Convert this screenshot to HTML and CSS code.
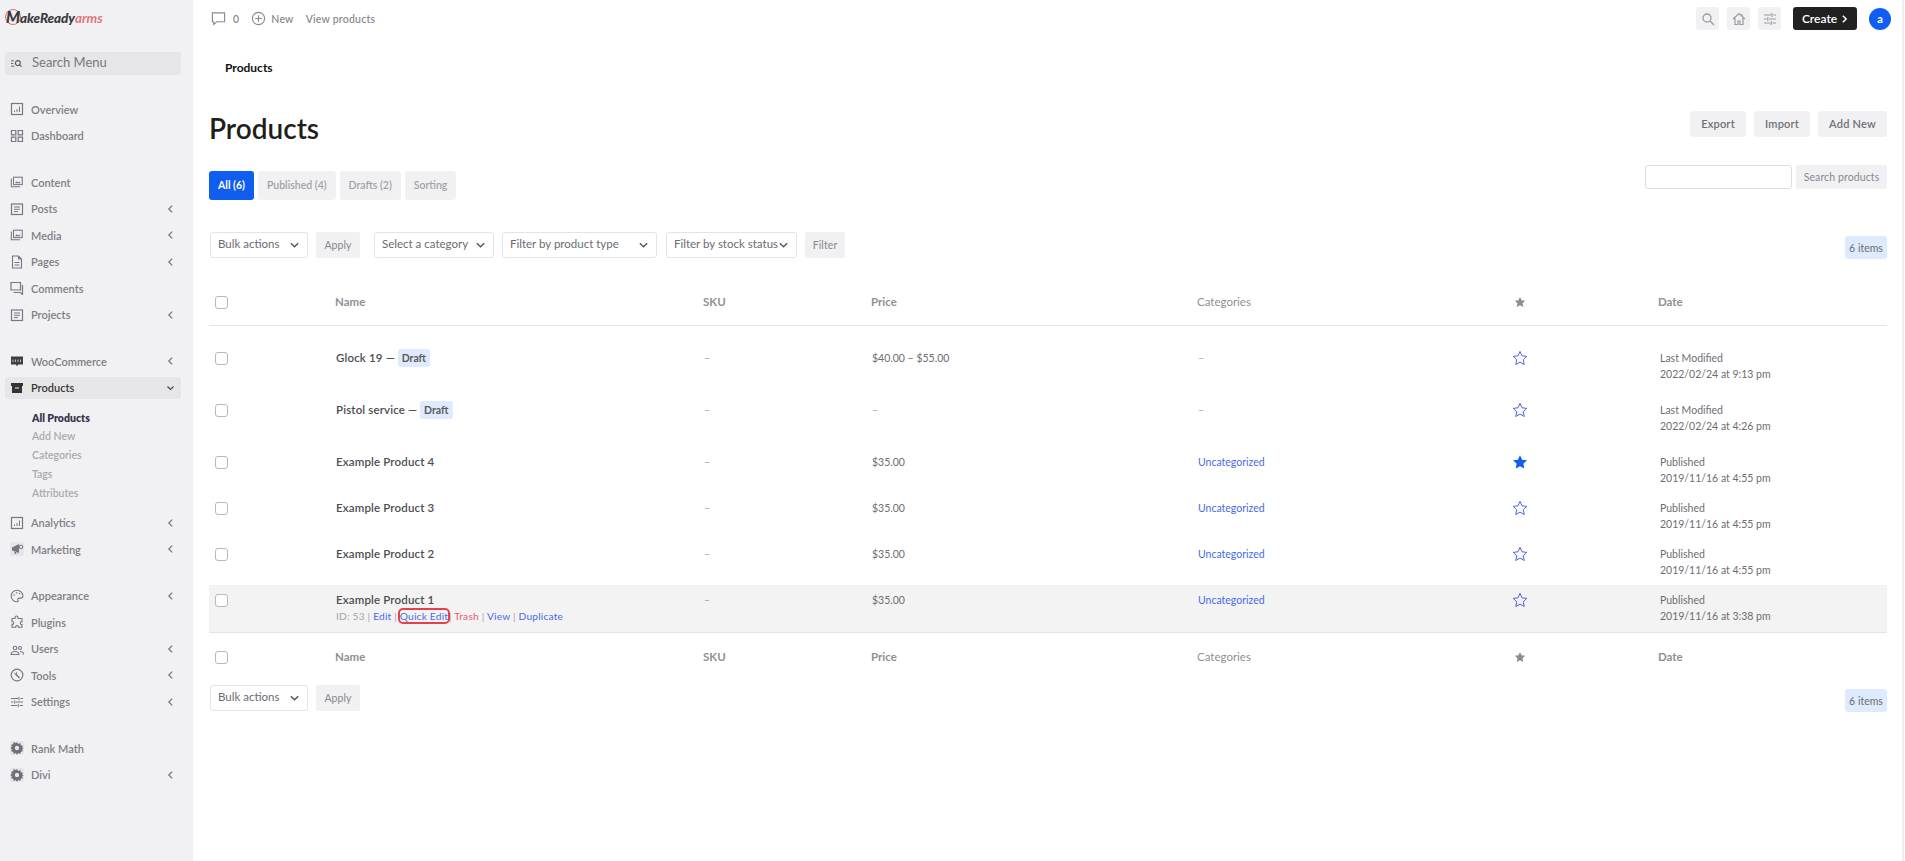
FILE: index.html
```html
<!DOCTYPE html>
<html lang="en">
<head>
<meta charset="utf-8">
<title>Products</title>
<link rel="stylesheet" href="styles.css">
</head>
<body>
<svg class="defs" width="0" height="0" aria-hidden="true">
  <symbol id="left" viewBox="0 0 8 12"><path d="M6 2 2 6l4 4" fill="none" stroke="currentColor" stroke-width="1.5"/></symbol>
  <symbol id="down" viewBox="0 0 12 8"><path d="M2 2l4 4 4-4" fill="none" stroke="currentColor" stroke-width="1.5"/></symbol>
  <symbol id="doc" viewBox="0 0 14 14"><rect x="1.5" y="2" width="11" height="10.5" fill="none" stroke="currentColor" stroke-width="1.2"/><path d="M4 5h6M4 7.3h6M4 9.6h4" stroke="currentColor" stroke-width="1"/></symbol>
  <symbol id="media" viewBox="0 0 16 14"><path d="M1.5 3v9.5h10" fill="none" stroke="currentColor" stroke-width="1.2"/><rect x="4" y="1.5" width="10" height="8.5" fill="none" stroke="currentColor" stroke-width="1.2"/><path d="M5.5 8.5l2.2-2.5 1.5 1.5 1.3-1 1.8 2z" fill="currentColor"/></symbol>
  <symbol id="chart" viewBox="0 0 14 14"><rect x="1.5" y="1.5" width="11" height="11" fill="none" stroke="currentColor" stroke-width="1.2"/><path d="M4.5 10V8.5M7 10V7M9.5 10V4.5" stroke="currentColor" stroke-width="1"/></symbol>
  <symbol id="gear" viewBox="0 0 14 14"><rect width="14" height="14" rx="2" fill="#e6e6e9"/><path d="M7 1.200l1.300 1.700 2-.8.500 2.100 2.100.5-.8 2L13.800 7l-1.700 1.300.8 2-2.100.5-.5 2.100-2-.8L7 13.800l-1.300-1.700-2 .8-.5-2.100-2.100-.5.8-2L.2 7l1.700-1.300-.8-2 2.100-.5.5-2.100 2 .8z" fill="#6f6f76"/><circle cx="7" cy="7" r="2.200" fill="#e6e6e9"/></symbol>
  <symbol id="star" viewBox="0 0 16 16"><path d="M8 1.400l2 4.400 4.800.6-3.500 3.300.9 4.800L8 12.100l-4.200 2.400.9-4.800L1.200 6.400 6 5.800z" fill="none" stroke="currentColor" stroke-width="1"/></symbol>
  <symbol id="starfill" viewBox="0 0 16 16"><path d="M8 1.200l2.100 4.500 4.900.6-3.600 3.400.9 4.900L8 12.200l-4.300 2.400.9-4.900L1 6.300l4.900-.6z" fill="currentColor"/></symbol>
</svg>

<aside class="sidebar">
  <div class="logo"><span class="logo-m"></span><span class="logo-text"><i>M</i>akeReady<b>arms</b></span></div>
  <div class="menu-search">
    <svg class="search-icon" viewBox="0 0 14 10"><path d="M1 2h3M1 5h2.500M1 8h3.500" stroke="#55555c" stroke-width="1"/><circle cx="8.500" cy="4.500" r="2.700" fill="none" stroke="#55555c" stroke-width="1.200"/><path d="M10.500 6.500l2 2" stroke="#55555c" stroke-width="1.200"/></svg>
    <span>Search Menu</span>
  </div>
  <nav class="nav">
    <div class="group">
      <a class="item"><svg class="ic"><use href="#chart"/></svg><span>Overview</span></a>
      <a class="item"><svg class="ic" viewBox="0 0 14 14"><path d="M1.500 1.500h4.300v4.300H1.500zM8.200 1.500h4.300v4.300H8.200zM1.500 8.200h4.300v4.300H1.500zM8.200 8.200h4.300v4.300H8.200z" fill="none" stroke="currentColor" stroke-width="1.200"/></svg><span>Dashboard</span></a>
    </div>
    <div class="group">
      <a class="item"><svg class="ic"><use href="#media"/></svg><span>Content</span></a>
      <a class="item"><svg class="ic"><use href="#doc"/></svg><span>Posts</span><svg class="chev"><use href="#left"/></svg></a>
      <a class="item"><svg class="ic"><use href="#media"/></svg><span>Media</span><svg class="chev"><use href="#left"/></svg></a>
      <a class="item"><svg class="ic" viewBox="0 0 14 14"><path d="M2.500 1h6l3 3v9h-9zM8.500 1v3h3M4.500 7.500h5M4.500 10h5" fill="none" stroke="currentColor" stroke-width="1.100"/></svg><span>Pages</span><svg class="chev"><use href="#left"/></svg></a>
      <a class="item"><svg class="ic" viewBox="0 0 14 14"><path d="M1 1.500h9.500v7.500H1zM12.500 4v9.500l-2-2H3.500" fill="none" stroke="currentColor" stroke-width="1.200"/></svg><span>Comments</span></a>
      <a class="item"><svg class="ic"><use href="#doc"/></svg><span>Projects</span><svg class="chev"><use href="#left"/></svg></a>
    </div>
    <div class="group">
      <a class="item"><svg class="ic" viewBox="0 0 14 14"><path d="M1 2.500h12v8H8l-1 2-1-2H1z" fill="#3f3f43"/><path d="M3 5.500v2.500M5.500 5.500v2.500M8 5.500v2.500M10.500 5.500v2.500" stroke="#bdbdc2" stroke-width="1"/></svg><span>WooCommerce</span><svg class="chev"><use href="#left"/></svg></a>
      <a class="item active"><svg class="ic" viewBox="0 0 14 14"><path d="M1 2h12v3H1z" fill="currentColor"/><path d="M2 5h10v7H2z" fill="currentColor"/><path d="M5 7h4" stroke="#f1f1f4" stroke-width="1"/></svg><span>Products</span><svg class="chev-down"><use href="#down"/></svg></a>
      <div class="sub">
        <a class="sub-item current">All Products</a>
        <a class="sub-item">Add New</a>
        <a class="sub-item">Categories</a>
        <a class="sub-item">Tags</a>
        <a class="sub-item">Attributes</a>
      </div>
      <a class="item"><svg class="ic"><use href="#chart"/></svg><span>Analytics</span><svg class="chev"><use href="#left"/></svg></a>
      <a class="item"><svg class="ic" viewBox="0 0 14 14"><rect width="14" height="14" rx="2" fill="#e6e6e9"/><path d="M2 5.500l7-3.500v9L2 8.500zM4 9l1 3h1.500L6 9.500z" fill="#77777e"/><circle cx="11" cy="5" r="1.800" fill="none" stroke="#77777e"/></svg><span>Marketing</span><svg class="chev"><use href="#left"/></svg></a>
    </div>
    <div class="group">
      <a class="item"><svg class="ic" viewBox="0 0 14 14"><path d="M7 1.200a5.800 5.800 0 1 0 0 11.600c1.300 0 1.500-1 1-1.700-.6-.9 0-2 1.200-2h1.800c1.200 0 1.800-.9 1.800-2.100C12.800 3.700 10.200 1.200 7 1.200z" fill="none" stroke="currentColor" stroke-width="1.100"/><circle cx="4" cy="6" r=".8" fill="currentColor"/><circle cx="6.500" cy="3.800" r=".8" fill="currentColor"/><circle cx="9.500" cy="4.500" r=".8" fill="currentColor"/></svg><span>Appearance</span><svg class="chev"><use href="#left"/></svg></a>
      <a class="item"><svg class="ic" viewBox="0 0 14 14"><path d="M5 2.500c0-2 3-2 3 0v1h4v3.200c-2-.6-2.500 3.300 0 2.800v2.800H8.500c.5-2.200-3.300-2.200-2.800 0H2V9.300C4.200 9.800 4.200 6 2 6.500V3.500h3z" fill="none" stroke="currentColor" stroke-width="1.100"/></svg><span>Plugins</span></a>
      <a class="item"><svg class="ic" viewBox="0 0 14 14"><circle cx="5" cy="6" r="1.800" fill="none" stroke="currentColor" stroke-width="1.100"/><circle cx="10" cy="6" r="1.500" fill="none" stroke="currentColor" stroke-width="1.100"/><path d="M1 12.500c0-4 8-4 8 0zM10 9.500c2 0 3.500 1 3.500 3" fill="none" stroke="currentColor" stroke-width="1.100"/></svg><span>Users</span><svg class="chev"><use href="#left"/></svg></a>
      <a class="item"><svg class="ic" viewBox="0 0 14 14"><circle cx="7" cy="7" r="5.800" fill="none" stroke="currentColor" stroke-width="1.200"/><path d="M5 3.800a2.300 2.300 0 0 0 .8 3.500L9 10.500l1-1-3-3.300A2.300 2.300 0 0 0 6.200 3.500V5.500H5z" fill="currentColor"/></svg><span>Tools</span><svg class="chev"><use href="#left"/></svg></a>
      <a class="item"><svg class="ic" viewBox="0 0 14 14"><path d="M1 3.500h7M10.500 3.500H13M1 7h2.500M6 7h7M1 10.500h6M9.500 10.500H13M9 1.800v3.400M4.800 5.300v3.400M8.200 8.800v3.400" stroke="currentColor" stroke-width="1"/></svg><span>Settings</span><svg class="chev"><use href="#left"/></svg></a>
    </div>
    <div class="group">
      <a class="item"><svg class="ic"><use href="#gear"/></svg><span>Rank Math</span></a>
      <a class="item"><svg class="ic"><use href="#gear"/></svg><span>Divi</span><svg class="chev"><use href="#left"/></svg></a>
    </div>
  </nav>
</aside>

<main class="main">
  <header class="topbar">
    <div class="top-left">
      <svg class="top-ic" viewBox="0 0 16 16"><path d="M1.500 2h13v9.500H6L3 14.500l-.2-3H1.500z" fill="none" stroke="#8a8a8a" stroke-width="1.200"/></svg>
      <span class="count">0</span>
      <svg class="top-ic plus" viewBox="0 0 16 16"><circle cx="8" cy="8" r="6.500" fill="none" stroke="#8a8a8a" stroke-width="1.200"/><path d="M4.500 8h7M8 4.500v7" stroke="#8a8a8a" stroke-width="1.200"/></svg>
      <span class="top-link">New</span>
      <span class="top-link view">View products</span>
    </div>
    <div class="top-right">
      <span class="square"><svg viewBox="0 0 14 14"><circle cx="6" cy="6" r="4" fill="none" stroke="#9a9a9f" stroke-width="1.300"/><path d="M9 9l4 4" stroke="#9a9a9f" stroke-width="1.300"/></svg></span>
      <span class="square"><svg viewBox="0 0 14 14"><path d="M1 7l6-5.500L13 7M3 6v6.500h3V9h2v3.500h3V6M10 2v2.500" fill="none" stroke="#9a9a9f" stroke-width="1.200"/></svg></span>
      <span class="square"><svg viewBox="0 0 14 14"><path d="M1 3h7M10.500 3H13M1 7h2.500M6 7h7M1 11h6M9.500 11H13M9 1v4M4.800 5v4M8.200 9v4" stroke="#9a9a9f" stroke-width="1.100"/></svg></span>
      <span class="create">Create <svg viewBox="0 0 8 12"><path d="M2 2l4 4-4 4" fill="none" stroke="#fff" stroke-width="1.800"/></svg></span>
      <span class="avatar">a</span>
    </div>
  </header>

  <div class="crumb">Products</div>

  <div class="title-row">
    <h1>Products</h1>
    <div class="actions">
      <a class="btn">Export</a>
      <a class="btn">Import</a>
      <a class="btn add">Add New</a>
    </div>
  </div>

  <div class="tabs-row">
    <div class="tabs">
      <a class="tab on">All (6)</a>
      <a class="tab">Published (4)</a>
      <a class="tab">Drafts (2)</a>
      <a class="tab">Sorting</a>
    </div>
    <div class="search">
      <span class="search-input"></span>
      <a class="plain search-btn">Search products</a>
    </div>
  </div>

  <div class="filters">
    <span class="sel w-bulk"><span>Bulk actions</span><svg><use href="#down"/></svg></span>
    <a class="plain apply">Apply</a>
    <span class="sel w-cat"><span>Select a category</span><svg><use href="#down"/></svg></span>
    <span class="sel w-type"><span>Filter by product type</span><svg><use href="#down"/></svg></span>
    <span class="sel w-stock"><span>Filter by stock status</span><svg><use href="#down"/></svg></span>
    <a class="plain filter">Filter</a>
    <span class="items">6 items</span>
  </div>

  <table class="table">
    <colgroup><col class="c1"><col class="c2"><col class="c3"><col class="c4"><col class="c5"><col class="c6"><col class="c7"></colgroup>
    <thead>
      <tr>
        <th><span class="box"></span></th><th>Name</th><th>SKU</th><th>Price</th><th class="light">Categories</th>
        <th><svg class="head-star"><use href="#starfill"/></svg></th><th>Date</th>
      </tr>
    </thead>
    <tbody>
      <tr class="tall first">
        <td><span class="box"></span></td><td><span class="name">Glock 19 —</span> <span class="badge">Draft</span></td><td class="mute">–</td><td>$40.00 – $55.00</td><td class="mute">–</td>
        <td><svg class="star"><use href="#star"/></svg></td><td>Last Modified<br>2022/02/24 at 9:13 pm</td>
      </tr>
      <tr class="tall">
        <td><span class="box"></span></td><td><span class="name">Pistol service —</span> <span class="badge">Draft</span></td><td class="mute">–</td><td class="mute">–</td><td class="mute">–</td>
        <td><svg class="star"><use href="#star"/></svg></td><td>Last Modified<br>2022/02/24 at 4:26 pm</td>
      </tr>
      <tr>
        <td><span class="box"></span></td><td><span class="name">Example Product 4</span></td><td class="mute">–</td><td>$35.00</td><td><a class="link">Uncategorized</a></td>
        <td><svg class="star solid"><use href="#starfill"/></svg></td><td>Published<br>2019/11/16 at 4:55 pm</td>
      </tr>
      <tr>
        <td><span class="box"></span></td><td><span class="name">Example Product 3</span></td><td class="mute">–</td><td>$35.00</td><td><a class="link">Uncategorized</a></td>
        <td><svg class="star"><use href="#star"/></svg></td><td>Published<br>2019/11/16 at 4:55 pm</td>
      </tr>
      <tr>
        <td><span class="box"></span></td><td><span class="name">Example Product 2</span></td><td class="mute">–</td><td>$35.00</td><td><a class="link">Uncategorized</a></td>
        <td><svg class="star"><use href="#star"/></svg></td><td>Published<br>2019/11/16 at 4:55 pm</td>
      </tr>
      <tr class="hover">
        <td><span class="box"></span></td>
        <td><span class="name">Example Product 1</span><div class="row-actions">ID: 53 | <a class="link">Edit</a> | <a class="link focus">Quick Edit</a> | <a class="trash">Trash</a> | <a class="link">View</a> | <a class="link">Duplicate</a></div></td>
        <td class="mute">–</td><td>$35.00</td><td><a class="link">Uncategorized</a></td>
        <td><svg class="star"><use href="#star"/></svg></td><td>Published<br>2019/11/16 at 3:38 pm</td>
      </tr>
    </tbody>
    <tfoot>
      <tr>
        <th><span class="box"></span></th><th>Name</th><th>SKU</th><th>Price</th><th class="light">Categories</th>
        <th><svg class="head-star"><use href="#starfill"/></svg></th><th>Date</th>
      </tr>
    </tfoot>
  </table>

  <div class="filters bottom">
    <span class="sel w-bulk"><span>Bulk actions</span><svg><use href="#down"/></svg></span>
    <a class="plain apply">Apply</a>
    <span class="items">6 items</span>
  </div>
</main>
</body>
</html>
```
FILE: styles.css
```css
* { box-sizing: border-box; }
html, body { margin: 0; height: 100%; }
body {
  display: flex;
  background: #fff;
  font-family: "Lato", "Noto Sans", sans-serif;
  font-size: 10.500px;
  color: #6d6d72;
  overflow: hidden;
}
.defs { position: absolute; }

/* sidebar */
.sidebar { width: 193px; flex: none; min-height: 861px; background: #f1f1f4; padding: 0 12px 0 5px; }
.logo { height: 52px; padding-top: 9px; display: flex; position: relative; }
.logo-m { width: 16px; height: 16px; border: 1.500px solid #e06a70; border-radius: 50%; flex: none; }
.logo-text { position: absolute; left: 1px; top: 7px; font-size: 13.500px; font-weight: 900; font-style: italic; color: #3a3a3e; letter-spacing: -.1px; white-space: nowrap; }
.logo-text i { font-size: 16px; }
.logo-text b { color: #e0777c; font-weight: 700; }
.menu-search { height: 23px; background: #e6e6e9; border-radius: 3px; display: flex; align-items: center; padding: 0 0 3px 5px; gap: 9px; font-size: 13px; color: #77777d; }
.search-icon { width: 13px; height: 9px; margin-top: 3px; }
.nav { margin-top: 21px; }
.group { margin-bottom: 20px; }
.item { height: 26.500px; display: flex; align-items: center; padding-left: 5px; gap: 7px; font-size: 11px; font-weight: 600; color: #7e7e84; position: relative; }
.item.active { height: 22px; margin: 2px 0; border-radius: 3px; background: #e6e6e9; color: #3d3530; }
.ic { width: 14px; height: 14px; flex: none; color: #77777e; }
.item.active .ic { color: #333; }
.chev, .chev-down { position: absolute; right: 7px; top: 50%; margin-top: -5px; width: 7px; height: 10px; color: #77777e; }
.chev-down { width: 9px; right: 6px; color: #444; }
.sub { padding: 8px 0 7px 27px; }
.sub-item { display: block; height: 18.800px; line-height: 18.800px; font-size: 10.500px; font-weight: 600; color: #a9a9ae; }
.sub-item.current { color: #36364a; font-weight: 800; }

/* main */
.main { flex: 1; min-width: 0; padding: 0 15px 0 16px; margin-right: 1px; border-right: 2px solid #eeeeee; }
.topbar { height: 37px; display: flex; justify-content: space-between; align-items: center; }
.top-left { display: flex; align-items: center; padding-left: 2px; font-weight: 600; color: #8c8c90; letter-spacing: .2px; }
.top-ic { width: 15px; height: 15px; }
.count { margin: 0 12px 0 7px; }
.top-link { margin-left: 5px; }
.view { margin-left: 12px; }
.top-right { display: flex; align-items: center; margin-right: -4px; }
.square { width: 23px; height: 23px; background: #f1f1f4; border-radius: 3px; display: flex; align-items: center; justify-content: center; margin-right: 8px; }
.square svg { width: 14px; height: 14px; }
.create { margin: 0 12px 0 4px; width: 64px; height: 23px; background: #212121; color: #fff; border-radius: 3px; font-size: 12px; font-weight: 600; display: flex; align-items: center; justify-content: center; gap: 4px; }
.create svg { width: 7px; height: 10px; }
.avatar { width: 22px; height: 22px; background: #0f5ef0; color: #fff; border-radius: 50%; font-size: 11px; font-weight: 700; display: flex; align-items: center; justify-content: center; }
.crumb { margin: 22px 0 0 16px; height: 18px; line-height: 18px; font-size: 12px; font-weight: 700; color: #111; }
.title-row { display: flex; justify-content: space-between; align-items: center; margin-top: 31px; height: 40px; }
h1 { margin: 0; font-size: 28px; font-weight: 600; color: #1e1e1e; }
.actions { display: flex; gap: 8px; margin-top: -9px; }
.btn { height: 26px; width: 56px; background: #f1f1f4; border-radius: 3px; font-size: 11px; font-weight: 600; letter-spacing: .2px; color: #6f6f73; display: flex; align-items: center; justify-content: center; }
.add { width: 69px; }
.tabs-row { display: flex; justify-content: space-between; margin-top: 23px; align-items: flex-start; }
.tabs { display: flex; gap: 4px; }
.tab { height: 29px; padding: 0 9px; line-height: 28px; background: #f1f1f4; border-radius: 3px; color: #a2a2a6; font-weight: 600; }
.tab.on { background: #0f5ef0; color: #fff; font-weight: 700; }
.search { display: flex; gap: 4px; margin-top: -6px; }
.search-input { width: 147px; height: 24px; border: 1px solid #dedee1; border-radius: 3px; background: #fff; }
.plain { height: 24px; padding: 0 8px; background: #f1f1f4; border-radius: 2px; color: #87878b; display: flex; align-items: center; justify-content: center; letter-spacing: .1px; white-space: nowrap; }
.search-btn { width: 91px; padding: 0; }
.filters { display: flex; align-items: flex-start; margin-top: 32px; position: relative; }
.sel { height: 26px; border: 1px solid #e4e4e6; border-radius: 3px; background: #fff; display: flex; align-items: center; justify-content: space-between; padding: 0 7px 3px 7px; font-size: 11.500px; color: #6c6c70; white-space: nowrap; }
.sel svg { width: 11px; height: 8px; color: #555; margin-top: 3px; flex: none; }
.w-bulk { width: 98px; margin-left: 1px; }
.w-cat { width: 120px; margin-left: 14px; }
.w-type { width: 155px; margin-left: 8px; }
.w-stock { width: 131px; margin-left: 9px; }
.apply { margin-left: 8px; height: 26px; width: 44px; padding: 0; }
.filter { margin-left: 8px; height: 26px; width: 40px; padding: 0; }
.items { position: absolute; right: 0; top: 4px; height: 23px; width: 42px; background: #deeafd; border-radius: 3px; color: #6d6d72; display: flex; align-items: center; justify-content: center; }

/* table */
.table { width: 100%; margin-top: 22px; border-collapse: collapse; table-layout: fixed; }
.c1 { width: 126px; }
.c2 { width: 368px; }
.c3 { width: 168px; }
.c4 { width: 326px; }
.c5 { width: 308px; }
.c6 { width: 153px; }
th { height: 45px; padding: 2px 0 4px 0; text-align: left; font-size: 11.500px; font-weight: 700; color: #909094; vertical-align: middle; }
th.light { font-weight: 400; font-size: 11.500px; }
thead tr { border-bottom: 1.500px solid #e4e4e6; }
td { padding: 7px 0 7px 1px; vertical-align: top; line-height: 16px; color: #6d6d72; }
td:last-child { padding-left: 2px; }
.tall td { padding-bottom: 13px; }
.first td { padding-top: 24px; }
.hover td { background: #f3f3f3; border-bottom: 1.500px solid #e4e4e6; }
tfoot th { height: 43px; padding: 5px 0 0; }
th:first-child, td:first-child { padding-left: 6px; }
.mute { color: #a5a5a9; }
.box { display: inline-block; width: 13px; height: 13px; border: 1px solid #b9b9bd; border-radius: 3px; background: #fff; vertical-align: middle; }
.name { font-size: 11.500px; font-weight: 600; letter-spacing: .15px; color: #4d4d52; }
.badge { display: inline-block; height: 18px; line-height: 18px; margin: -2px 0; padding: 0 4px; background: #deeafd; border-radius: 3px; font-weight: 700; color: #5b5b60; }
.link { color: #4a6ae8; }
.trash { color: #e9577a; }
.row-actions { font-size: 10.200px; color: #a5a5a9; letter-spacing: .2px; line-height: 17px; }
.focus { outline: 2px solid #e5414a; border-radius: 3px; margin-right: -2px; }
.star { width: 16px; height: 16px; color: #4a63ee; margin-left: 6px; }
.star.solid { color: #0f5ef0; }
.head-star { width: 12px; height: 12px; color: #8d8d91; margin-left: 9px; vertical-align: middle; }
.bottom { margin-top: 10px; }
```
